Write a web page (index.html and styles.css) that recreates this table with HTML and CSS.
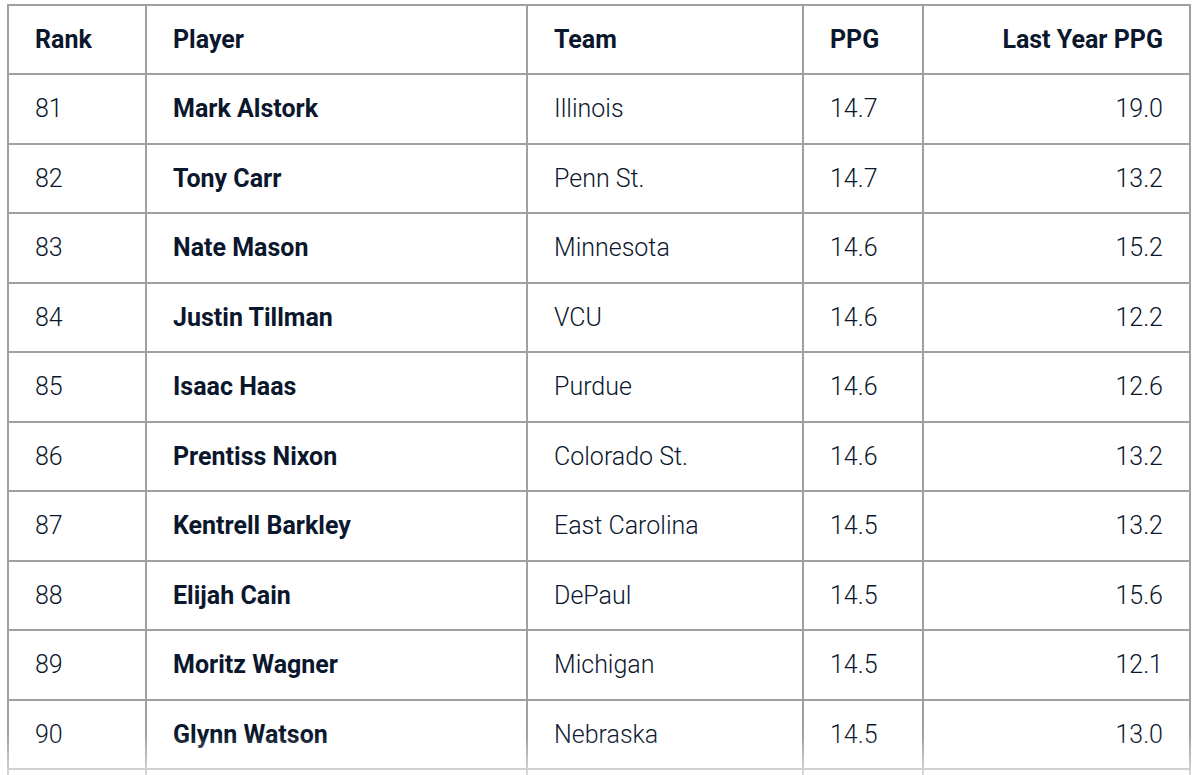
FILE: index.html
```html
<!DOCTYPE html>
<html lang="en">
<head>
<meta charset="utf-8">
<title>PPG Rankings</title>
<link rel="stylesheet" href="styles.css">
</head>
<body>
<div class="wrap">
<table class="stats">
  <thead>
    <tr><th class="c-rank">Rank</th><th class="c-player">Player</th><th class="c-team">Team</th><th class="c-ppg">PPG</th><th class="c-last">Last Year PPG</th></tr>
  </thead>
  <tbody>
    <tr><td>81</td><td class="name">Mark Alstork</td><td>Illinois</td><td>14.7</td><td class="num">19.0</td></tr>
    <tr><td>82</td><td class="name">Tony Carr</td><td>Penn St.</td><td>14.7</td><td class="num">13.2</td></tr>
    <tr><td>83</td><td class="name">Nate Mason</td><td>Minnesota</td><td>14.6</td><td class="num">15.2</td></tr>
    <tr><td>84</td><td class="name">Justin Tillman</td><td>VCU</td><td>14.6</td><td class="num">12.2</td></tr>
    <tr><td>85</td><td class="name">Isaac Haas</td><td>Purdue</td><td>14.6</td><td class="num">12.6</td></tr>
    <tr><td>86</td><td class="name">Prentiss Nixon</td><td>Colorado St.</td><td>14.6</td><td class="num">13.2</td></tr>
    <tr><td>87</td><td class="name">Kentrell Barkley</td><td>East Carolina</td><td>14.5</td><td class="num">13.2</td></tr>
    <tr><td>88</td><td class="name">Elijah Cain</td><td>DePaul</td><td>14.5</td><td class="num">15.6</td></tr>
    <tr><td>89</td><td class="name">Moritz Wagner</td><td>Michigan</td><td>14.5</td><td class="num">12.1</td></tr>
    <tr><td>90</td><td class="name">Glynn Watson</td><td>Nebraska</td><td>14.5</td><td class="num">13.0</td></tr>
    <tr class="next"><td></td><td></td><td></td><td></td><td></td></tr>
  </tbody>
</table>
<div class="fade"></div>
</div>
</body>
</html>
```
FILE: styles.css
```css
html, body {
  margin: 0;
  padding: 0;
  background: #ffffff;
  overflow: hidden;
}
.wrap {
  position: relative;
  padding: 4px 0 0 7px;
  height: 775px;
  box-sizing: border-box;
  overflow: hidden;
}
.stats {
  border-collapse: collapse;
  width: 1184px;
  table-layout: fixed;
  font-family: Roboto, "Liberation Sans", sans-serif;
  color: #0b172d;
  border: 2px solid #5a5a5a;
}
.stats th, .stats td {
  border: 2px solid #a0a0a0;
  padding: 0 26px;
  text-align: left;
  vertical-align: middle;
  box-sizing: border-box;
}
.stats th {
  height: 69px;
  font-weight: 700;
  font-size: 25px;
}
.stats td {
  height: 69.5px;
  font-weight: 300;
  font-size: 25px;
}
.stats td.name {
  font-weight: 700;
}
.stats .c-rank { width: 138px; }
.stats .c-player { width: 381px; }
.stats .c-team { width: 276px; }
.stats .c-ppg { width: 120px; }
.stats th.c-last, .stats td.num { text-align: right; }
.fade {
  position: absolute;
  left: 0;
  right: 0;
  bottom: 0;
  height: 40px;
  background: linear-gradient(to bottom, rgba(255,255,255,0), rgba(255,255,255,0.6));
  pointer-events: none;
}
```
